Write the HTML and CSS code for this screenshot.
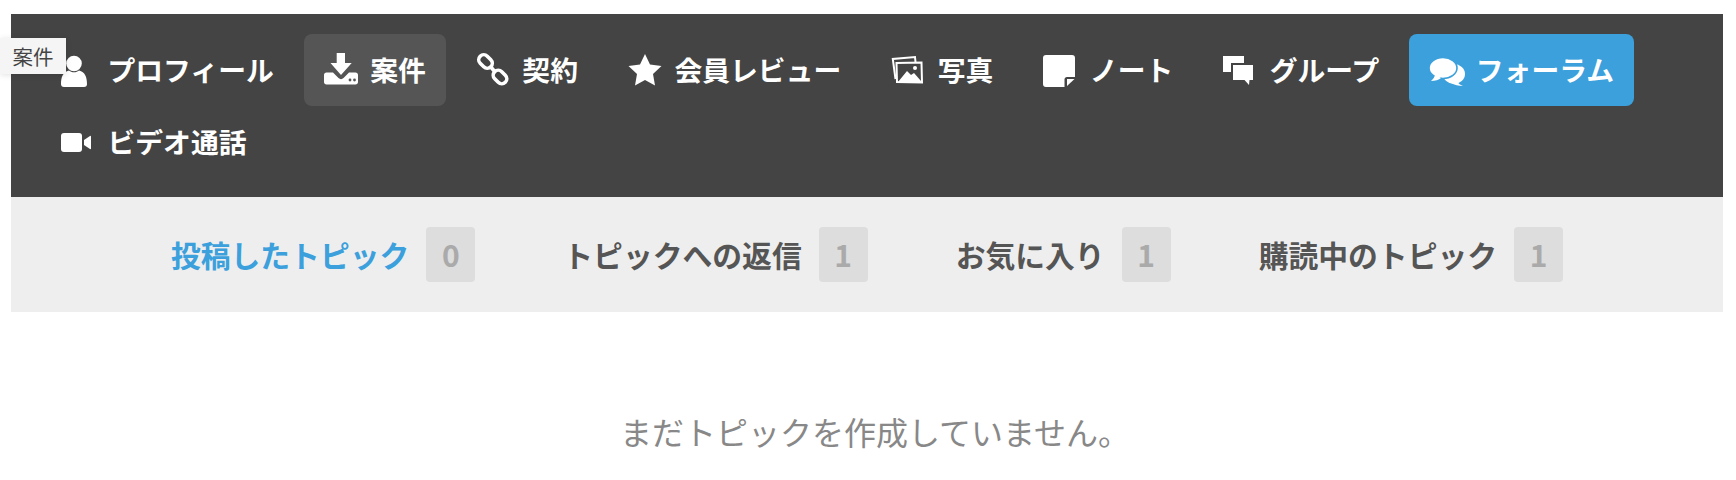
FILE: index.html
```html
<!DOCTYPE html>
<html lang="ja">
<head>
<meta charset="utf-8">
<title>フォーラム</title>
<link rel="stylesheet" href="styles.css">
</head>
<body>
<div class="tip">案件</div>
<nav class="nav">
  <a class="tab"><svg class="ic" viewBox="0 0 36 36"><circle cx="13" cy="11.500" r="7.800"/><path d="M0 32c0-7 2-12 8-13.500 1.500 1 3 1.800 5 1.800s3.500-.8 5-1.800c6 1.500 8 6.500 8 13.500 0 2-1 3-3 3H3c-2 0-3-1-3-3z"/></svg>プロフィール</a>
  <a class="tab tab-hover"><svg class="ic" viewBox="0 0 36 36"><path d="M12.700 1H21v10h6.700L17 23 6.500 11h6.200z"/><path d="M0 23c0-1.500 1-2.500 2.500-2.500H9l5.500 5.500c1.500 1.500 3.500 1.500 5 0l5.500-5.500h6.500c1.500 0 2.500 1 2.500 2.500v7c0 1.500-1 2.500-2.500 2.500h-29C1 32.500 0 31.500 0 30z"/><circle class="dot" cx="26" cy="28" r="1.400"/><circle class="dot" cx="30.500" cy="28" r="1.400"/></svg>案件</a>
  <a class="tab"><svg class="ic" viewBox="0 0 36 36"><g class="line-thick"><rect x="2" y="4.500" width="15" height="10" rx="5" transform="rotate(45 9.500 9.500)"/><rect x="16.500" y="20" width="15" height="10" rx="5" transform="rotate(45 24 25)"/><path d="M14 14l5.500 6.500"/></g></svg>契約</a>
  <a class="tab"><svg class="ic" viewBox="0 0 36 36"><path d="M17 2l5 10.500 11.500 1.500-8.500 8 2 11.500-10-5.500-10 5.500 2-11.500L.5 14l11.500-1.500z"/></svg>会員レビュー</a>
  <a class="tab"><svg class="ic" viewBox="0 0 36 36"><path class="line" d="M4.500 27L1.800 7 24 5l.5 5"/><path class="line" d="M5.500 11l25-.5.5 20-25-.5z"/><circle cx="24" cy="16" r="2"/><path d="M7 30l9-11 4 4 3-2 7 8v1.500z"/></svg>写真</a>
  <a class="tab"><svg class="ic" viewBox="0 0 36 36"><path d="M3 3h26c2 0 3 1 3 3v19h-8c-1.500 0-2.500 1-2.500 2.500V35H3c-2 0-3-1-3-3V6c0-2 1-3 3-3z"/><path d="M24 27h7.500L24 34z"/></svg>ノート</a>
  <a class="tab"><svg class="ic" viewBox="0 0 36 36"><path d="M0 4h21v7H8v9H0z"/><path d="M10 13h20v15h-3.500L26 33l-4.500-5H10z"/></svg>グループ</a>
  <a class="tab tab-on"><svg class="ic" viewBox="0 0 36 36"><ellipse cx="25" cy="22" rx="11" ry="10"/><path d="M28 29c1 2 3 4 6 5-4 0-9-1-12-3z"/><g class="front"><ellipse cx="14" cy="16" rx="14" ry="10.500"/></g><path d="M6 22c0 3-2 5-4 7 4 0 8-1 10-3z"/></svg>フォーラム</a>
  <a class="tab"><svg class="ic" viewBox="0 0 36 36"><rect x="0" y="9" width="21" height="19" rx="3"/><path d="M23 16l6-4c.6-.4 1 0 1 .6v11.800c0 .6-.4 1-1 .6l-6-4z"/></svg>ビデオ通話</a>
</nav>
<div class="sub">
  <a class="sub-item sub-on">投稿したトピック<span class="count">0</span></a>
  <a class="sub-item">トピックへの返信<span class="count">1</span></a>
  <a class="sub-item">お気に入り<span class="count">1</span></a>
  <a class="sub-item">購読中のトピック<span class="count">1</span></a>
</div>
<p class="empty">まだトピックを作成していません。</p>
</body>
</html>
```
FILE: styles.css
```css
* { box-sizing: border-box; }
html, body { height: 480px; overflow: hidden; }
body {
  margin: 0;
  padding: 14px 13px 0 11px;
  background: #fff;
  font-family: "Noto Sans CJK JP", "Noto Sans", sans-serif;
}
.tip {
  position: absolute;
  z-index: 2;
  left: 0;
  top: 38px;
  width: 66px;
  height: 36px;
  background: #f5f5f5;
  color: #444;
  font-size: 20.500px;
  line-height: 36px;
  text-align: center;
  box-shadow: 0 1px 6px rgba(0, 0, 0, .12);
}
.nav {
  display: flex;
  flex-wrap: wrap;
  column-gap: 10px;
  height: 183px;
  padding: 20px 30px 19px;
  background: #444;
}
.tab {
  display: flex;
  align-items: center;
  gap: 10.500px;
  height: 72px;
  padding: 0 20px 2px;
  border-radius: 8px;
  color: #fff;
  font-size: 27.800px;
  font-weight: 700;
}
.tab-hover { background: #555; }
.tab-on { background: #3ba0dc; }
.ic { width: 36px; height: 36px; margin-top: 2px; flex: none; fill: #fff; }
.dot { fill: #555; }
.line { fill: none; stroke: #fff; stroke-width: 2; }
.line-thick { fill: none; stroke: #fff; stroke-width: 3.600; }
.front { stroke: #3ba0dc; stroke-width: 1.600; }
.sub {
  display: flex;
  justify-content: center;
  gap: 88px;
  height: 115px;
  padding-top: 30px;
  background: #eee;
}
.sub-item {
  display: flex;
  align-items: center;
  gap: 17px;
  height: 55px;
  padding-bottom: 2px;
  color: #555;
  font-size: 29.800px;
  font-weight: 700;
}
.sub-on { color: #3ba0dc; }
.count {
  width: 49px;
  height: 55px;
  margin-top: 2px;
  border-radius: 4px;
  background: #ddd;
  color: #aaa;
  font-size: 30px;
  line-height: 55px;
  text-align: center;
}
.empty {
  margin: 96px 0 0;
  padding-left: 16px;
  color: #888;
  font-size: 32px;
  line-height: 46px;
  text-align: center;
}
```
